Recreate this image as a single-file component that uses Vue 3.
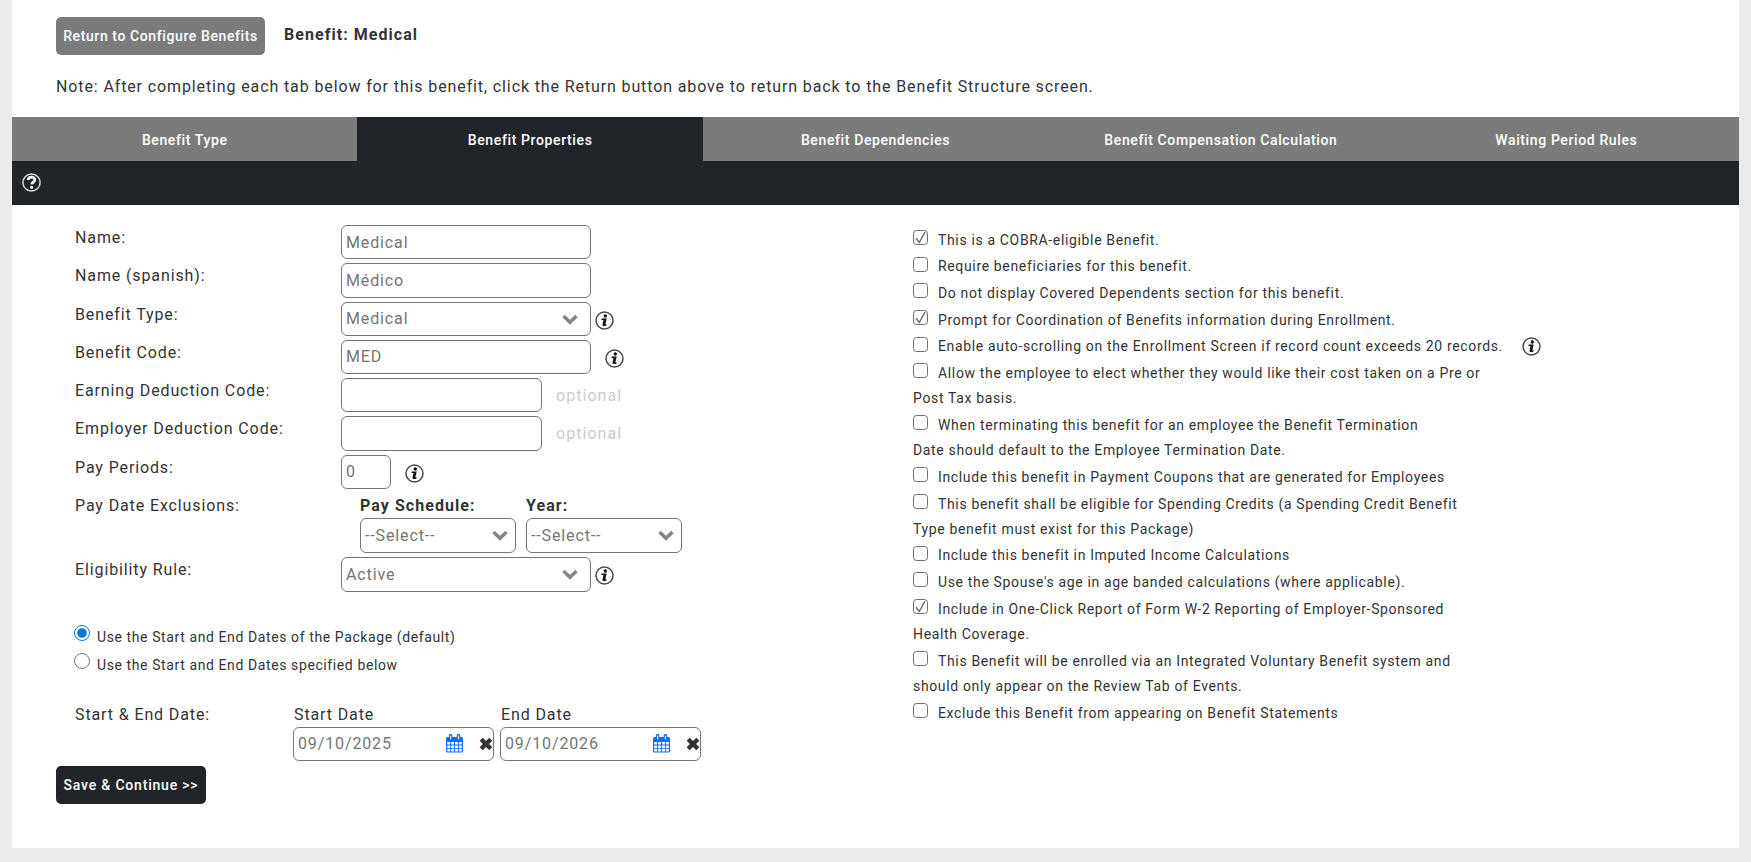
<script setup>
    import { ref } from "vue";

    const tabs = [
      "Benefit Type",
      "Benefit Properties",
      "Benefit Dependencies",
      "Benefit Compensation Calculation",
      "Waiting Period Rules"
    ];
    const activeTab = ref("Benefit Properties");

    const form = ref({
      name: "Medical",
      nameSpanish: "Médico",
      type: "Medical",
      code: "MED",
      earningCode: "",
      employerCode: "",
      payPeriods: "0",
      paySchedule: "--Select--",
      year: "--Select--",
      rule: "Active",
      dateMode: "package"
    });

    const dates = ref([
      { label: "Start Date", value: "09/10/2025" },
      { label: "End Date", value: "09/10/2026" }
    ]);

    // text is split where the label wraps under its checkbox
    const options = ref([
      { checked: true, lines: ["This is a COBRA-eligible Benefit."] },
      { checked: false, lines: ["Require beneficiaries for this benefit."] },
      { checked: false, lines: ["Do not display Covered Dependents section for this benefit."] },
      { checked: true, lines: ["Prompt for Coordination of Benefits information during Enrollment."] },
      { checked: false, info: true, lines: ["Enable auto-scrolling on the Enrollment Screen if record count exceeds 20 records."] },
      { checked: false, lines: ["Allow the employee to elect whether they would like their cost taken on a Pre or", "Post Tax basis."] },
      { checked: false, lines: ["When terminating this benefit for an employee the Benefit Termination", "Date should default to the Employee Termination Date."] },
      { checked: false, lines: ["Include this benefit in Payment Coupons that are generated for Employees"] },
      { checked: false, lines: ["This benefit shall be eligible for Spending Credits (a Spending Credit Benefit", "Type benefit must exist for this Package)"] },
      { checked: false, lines: ["Include this benefit in Imputed Income Calculations"] },
      { checked: false, lines: ["Use the Spouse's age in age banded calculations (where applicable)."] },
      { checked: true, lines: ["Include in One-Click Report of Form W-2 Reporting of Employer-Sponsored", "Health Coverage."] },
      { checked: false, lines: ["This Benefit will be enrolled via an Integrated Voluntary Benefit system and", "should only appear on the Review Tab of Events."] },
      { checked: false, lines: ["Exclude this Benefit from appearing on Benefit Statements"] }
    ]);
</script>

<template>
    <svg class="sprite" width="0" height="0">
      <symbol id="info" viewBox="0 0 19 19">
        <circle cx="9.5" cy="9.5" r="8.5" fill="#fff" stroke="#4a4a4a" stroke-width="1.5" />
        <circle cx="10.3" cy="5" r="1.7" fill="#111" />
        <path d="M6.6 7.5h5.1l-1.3 5.5c-.1.5.3.6 1.3.1l-.3 1.3c-1 .7-4.3 1.3-3.9-.8l1-4.7H6.4z" fill="#111" />
      </symbol>
      <symbol id="chevron" viewBox="0 0 16 11">
        <path d="M1.5 2l6.5 6.3L14.5 2" fill="none" stroke="#858585" stroke-width="3.4" />
      </symbol>
    </svg>
    <div class="page">
      <header class="top">
        <button class="btn return">Return to Configure Benefits</button>
        <b class="heading">Benefit: Medical</b>
      </header>
      <p class="note">Note: After completing each tab below for this benefit, click the Return button above to return back to the Benefit Structure screen.</p>

      <nav class="tabs">
        <a v-for="tab in tabs" :key="tab" :class="{ active: tab === activeTab }" @click="activeTab = tab">{{ tab }}</a>
      </nav>
      <div class="help-bar">
        <svg width="19" height="19" viewBox="0 0 19 19">
          <circle cx="9.5" cy="9.5" r="8.6" fill="none" stroke="#dcdcdc" stroke-width="1.5" />
          <path d="M6.2 7.1c0-4 6.7-4 6.7-.3 0 2.4-2.9 2.3-3.1 4.5" fill="none" stroke="#fff" stroke-width="2.7" />
          <circle cx="9.6" cy="14.2" r="1.5" fill="#fff" />
        </svg>
      </div>

      <div class="columns">
        <section class="left">
          <div class="row">
            <label>Name:</label>
            <input v-model="form.name" class="box wide">
          </div>
          <div class="row">
            <label>Name (spanish):</label>
            <input v-model="form.nameSpanish" class="box wide">
          </div>
          <div class="row">
            <label>Benefit Type:</label>
            <div class="select wide">
              <select v-model="form.type" class="box"><option>Medical</option></select>
              <svg class="chevron"><use href="#chevron" /></svg>
            </div>
            <svg class="info near"><use href="#info" /></svg>
          </div>
          <div class="row">
            <label>Benefit Code:</label>
            <input v-model="form.code" class="box wide">
            <svg class="info"><use href="#info" /></svg>
          </div>
          <div class="row">
            <label>Earning Deduction Code:</label>
            <input v-model="form.earningCode" class="box medium">
            <span class="optional">optional</span>
          </div>
          <div class="row">
            <label>Employer Deduction Code:</label>
            <input v-model="form.employerCode" class="box medium">
            <span class="optional">optional</span>
          </div>
          <div class="row">
            <label>Pay Periods:</label>
            <input v-model="form.payPeriods" class="box small">
            <svg class="info"><use href="#info" /></svg>
          </div>
          <div class="row exclusions">
            <label>Pay Date Exclusions:</label>
            <div class="group">
              <b>Pay Schedule:</b>
              <div class="select">
                <select v-model="form.paySchedule" class="box"><option>--Select--</option></select>
                <svg class="chevron"><use href="#chevron" /></svg>
              </div>
            </div>
            <div class="group">
              <b>Year:</b>
              <div class="select">
                <select v-model="form.year" class="box"><option>--Select--</option></select>
                <svg class="chevron"><use href="#chevron" /></svg>
              </div>
            </div>
          </div>
          <div class="row rule">
            <label>Eligibility Rule:</label>
            <div class="select wide">
              <select v-model="form.rule" class="box"><option>Active</option></select>
              <svg class="chevron"><use href="#chevron" /></svg>
            </div>
            <svg class="info near"><use href="#info" /></svg>
          </div>

          <div class="radios">
            <label><input v-model="form.dateMode" type="radio" value="package"><span>Use the Start and End Dates of the Package (default)</span></label>
            <label><input v-model="form.dateMode" type="radio" value="custom"><span>Use the Start and End Dates specified below</span></label>
          </div>

          <div class="dates">
            <label class="dates-label">Start &amp; End Date:</label>
            <div v-for="date in dates" :key="date.label" class="date">
              <label>{{ date.label }}</label>
              <div class="date-box">
                <input v-model="date.value" class="box">
                <svg class="calendar" viewBox="0 0 17 19">
                  <path d="M0 4.5q0-1.5 1.5-1.5h14q1.5 0 1.5 1.5v12.7q0 1.3-1.3 1.3H1.3Q0 18.5 0 17.2z" fill="#0d6efd" />
                  <path d="M1.2 8h3v2.6h-3zM5.1 8h3v2.6h-3zM9 8h3v2.6H9zM12.9 8h2.9v2.6h-2.9zM1.2 11.4h3v2.6h-3zM5.1 11.4h3v2.6h-3zM9 11.4h3v2.6H9zM12.9 11.4h2.9v2.6h-2.9zM1.2 14.8h3v2.6h-3zM5.1 14.8h3v2.6h-3zM9 14.8h3v2.6H9zM12.9 14.8h2.9v2.6h-2.9z" fill="#f3f7ff" />
                  <path d="M4.6 1.7v3.2M12.5 1.7v3.2" stroke="#0d6efd" stroke-width="3.6" stroke-linecap="round" />
                  <path d="M4.6 1.8v3M12.5 1.8v3" stroke="#cfe2ff" stroke-width="1.3" stroke-linecap="round" />
                </svg>
                <svg class="clear" viewBox="0 0 13 13">
                  <path d="M2 2l9 9M11 2l-9 9" stroke="#333" stroke-width="4" />
                </svg>
              </div>
            </div>
          </div>
          <button class="btn save">Save &amp; Continue &gt;&gt;</button>
        </section>

        <section class="right">
          <label v-for="option in options" :key="option.lines[0]" class="option">
            <span class="line">
              <input v-model="option.checked" type="checkbox">
              <svg v-if="option.checked" class="tick" viewBox="0 0 15 15"><path d="M3 8.2l3.3 4.3L12 2" fill="none" stroke="#6a6a6a" stroke-width="1.5" /></svg>
              <span>{{ option.lines[0] }}</span>
              <svg v-if="option.info" class="info"><use href="#info" /></svg>
            </span>
            <span v-if="option.lines[1]" class="wrapped">{{ option.lines[1] }}</span>
          </label>
        </section>
      </div>
    </div>
</template>

<style>
  body {
    background-color: #ebebeb;
  }
</style>

<style scoped>
* {
  box-sizing: border-box;
}

.sprite {
  position: absolute;
}

.page {
  width: 1727px;
  height: 848px;
  margin: 0 12px;
  background-color: #fff;
  color: #333;
  font-family: Roboto, "Liberation Sans", sans-serif;
  font-size: 16px;
  line-height: 20px;
  letter-spacing: 0.88px;
  white-space: nowrap;
}

.top {
  display: flex;
  height: 55px;
  padding: 17px 0 0 44px;
}

.btn {
  height: 38px;
  padding: 0 0 1px;
  border: none;
  border-radius: 5px;
  color: #fff;
  font-family: inherit;
  font-size: 14px;
  font-weight: 500;
  letter-spacing: 0.6px;
}

.return {
  width: 209px;
  background-color: #7b7b7b;
}

.heading {
  margin: 8px 0 0 19px;
  letter-spacing: 1.05px;
}

.note {
  margin: 22px 0 0 44px;
  height: 40px;
}

.tabs {
  display: flex;
}

.tabs a {
  flex: 1;
  height: 44px;
  line-height: 46px;
  text-align: center;
  color: #fff;
  background-color: #7b7b7b;
  font-size: 14px;
  font-weight: 500;
  letter-spacing: 0.62px;
  cursor: pointer;
}

.tabs .active {
  background-color: #212529;
}

.help-bar {
  height: 44px;
  padding: 12px 10px;
  background-color: #212529;
}

.columns {
  display: flex;
  padding-top: 20px;
}

.left {
  width: 838px;
  padding-left: 63px;
}

.row {
  display: flex;
  height: 38.25px;
}

.row > label {
  width: 266px;
  padding-top: 3px;
}

.box {
  display: block;
  width: 100%;
  height: 34.4px;
  margin: 0;
  padding: 0 4px;
  border: 1px solid #757575;
  border-radius: 6px;
  background-color: #fff;
  color: #757575;
  font-family: inherit;
  font-size: 16px;
  letter-spacing: 0.87px;
  appearance: none;
  outline: none;
}

.wide {
  width: 250px;
}

.medium {
  width: 201px;
}

.small {
  width: 50px;
}

.select {
  position: relative;
}

.chevron {
  position: absolute;
  right: 13px;
  top: 12px;
  width: 16px;
  height: 11px;
}

.info {
  flex: none;
  width: 19px;
  height: 19px;
  margin: 9px 0 0 14px;
}

.info.near {
  margin-left: 4px;
}

.optional {
  margin: 8px 0 0 14px;
  color: #ccc;
  letter-spacing: 1.05px;
}

.exclusions {
  height: 64.6px;
}

.row.rule {
  height: 67.4px;
}

.exclusions > label {
  width: 285px;
}

.group {
  width: 156px;
  margin-right: 10px;
}

.group .chevron {
  right: 8px;
}

.group b {
  display: block;
  height: 25.4px;
  padding-top: 3px;
  letter-spacing: 1.05px;
}

.radios {
  display: flex;
  flex-direction: column;
  font-size: 14px;
  letter-spacing: 0.6px;
}

.radios label {
  display: flex;
  height: 28.5px;
}

.radios input {
  width: 16px;
  height: 16px;
  margin: 0 7px 0 -1px;
  accent-color: #0078d7;
}

.radios span {
  padding-top: 2px;
}

.dates {
  display: flex;
  gap: 6px;
  margin-top: 23px;
}

.dates-label {
  width: 212px;
}

.date {
  width: 201px;
}

.date label {
  display: block;
  height: 22px;
  padding-left: 1px;
}

.date-box {
  position: relative;
}

.calendar {
  position: absolute;
  left: 153px;
  top: 7px;
  width: 17px;
  height: 19px;
}

.clear {
  position: absolute;
  left: 186px;
  top: 10px;
  width: 14px;
  height: 14px;
}

.save {
  width: 150px;
  margin: 5px 0 0 -19px;
  background-color: #212529;
  letter-spacing: 0.8px;
}

.right {
  padding: 5px 0 0 63px;
  font-size: 14px;
  letter-spacing: 0.65px;
}

.option {
  display: block;
}

.line {
  position: relative;
  display: flex;
  height: 26.7px;
}

.line input {
  width: 15px;
  height: 15px;
  margin: 0 10px 0 0;
  border: 1px solid #6e6e6e;
  border-radius: 3.5px;
  background-color: #fff;
  appearance: none;
}

.line > span {
  margin-top: -0.3px;
}

.line .info {
  margin: 0 0 0 19px;
}

.tick {
  position: absolute;
  left: 0;
  top: 0;
  width: 15px;
  height: 15px;
}

.wrapped {
  display: block;
  height: 25.2px;
  margin-top: -1.7px;
  padding-bottom: 1.7px;
  box-sizing: content-box;
}
</style>
